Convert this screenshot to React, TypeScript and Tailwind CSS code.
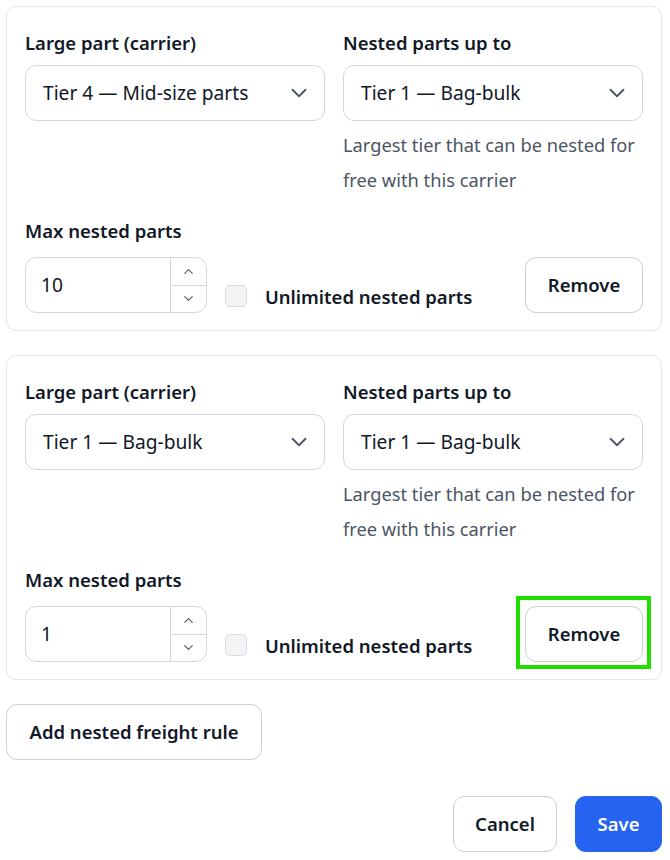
import React from "react";

type Rule = {
  carrier: string;
  nested: string;
  max: string;
  focused?: boolean;
};

const rules: Rule[] = [
  { carrier: "Tier 4 — Mid-size parts", nested: "Tier 1 — Bag-bulk", max: "10" },
  { carrier: "Tier 1 — Bag-bulk", nested: "Tier 1 — Bag-bulk", max: "1", focused: true },
];

function Chevron({ up = false, className = "" }: { up?: boolean; className?: string }) {
  return (
    <svg viewBox="0 0 20 20" fill="none" className={className}>
      <path
        d={up ? "M5 12.5 10 7.5l5 5" : "M5 7.5 10 12.5l5-5"}
        stroke="currentColor"
        strokeWidth="1.4"
        strokeLinecap="round"
        strokeLinejoin="round"
      />
    </svg>
  );
}

function Select({ value }: { value: string }) {
  return (
    <div className="flex h-[56px] items-center justify-between rounded-[11px] border border-[#d4d7dd] bg-white pl-[17px] pr-[12px] text-[19.2px] text-[#111827]">
      <span>{value}</span>
      <Chevron className="h-[26px] w-[26px] text-[#4b5563]" />
    </div>
  );
}

function RuleCard({ rule }: { rule: Rule }) {
  return (
    <div className="rounded-[10px] border border-[#e3e5ea] bg-white px-[18px] pt-[22px] pb-[17px]">
      <div className="grid grid-cols-2 gap-x-[18px]">
        <div>
          <div className="mb-[8px] text-[18.5px] leading-[28px] font-semibold text-[#111827]">Large part (carrier)</div>
          <Select value={rule.carrier} />
        </div>
        <div>
          <div className="mb-[8px] text-[18.5px] leading-[28px] font-semibold text-[#111827]">Nested parts up to</div>
          <Select value={rule.nested} />
          <p className="mt-[6px] text-[18.3px] leading-[35px] text-[#4b5563]">
            Largest tier that can be nested for free with this carrier
          </p>
        </div>
      </div>

      <div className="mt-[20px] flex items-end">
        <div>
          <div className="mb-[12px] text-[18.5px] leading-[28px] font-semibold text-[#111827]">Max nested parts</div>
          <div className="flex h-[56px] w-[182px] overflow-hidden rounded-[11px] border border-[#d4d7dd] bg-white">
            <div className="flex flex-1 items-center pl-[15px] text-[19.2px] text-[#111827]">{rule.max}</div>
            <div className="flex w-[36px] flex-col border-l border-[#d4d7dd]">
              <div className="flex flex-1 items-center justify-center border-b border-[#d4d7dd] text-[#4b5563]">
                <Chevron up className="h-[15px] w-[15px]" />
              </div>
              <div className="flex flex-1 items-center justify-center text-[#4b5563]">
                <Chevron className="h-[15px] w-[15px]" />
              </div>
            </div>
          </div>
        </div>

        <label className="ml-[18px] flex h-[32px] items-center gap-[18px]">
          <span className="-mt-[3px] h-[22px] w-[22px] rounded-[5px] border border-[#d9dce1] bg-[#f3f4f6]" />
          <span className="text-[18.5px] font-semibold text-[#111827]">Unlimited nested parts</span>
        </label>

        <button className="relative ml-auto h-[56px] w-[118px] rounded-[11px] border border-[#cfcfcf] bg-white text-[18.5px] font-semibold text-[#111827]">
          Remove
          {rule.focused && (
            <span className="pointer-events-none absolute -top-[11px] -right-[9px] -bottom-[8px] -left-[10px] border-4 border-[#22de00]" />
          )}
        </button>
      </div>
    </div>
  );
}

export default function App() {
  return (
    <div className="min-h-screen w-[670px] bg-white px-[6px] pt-[6px] font-['Noto_Sans',sans-serif]">
      <div className="flex w-[656px] flex-col gap-[24px]">
        {rules.map((rule, i) => (
          <RuleCard key={i} rule={rule} />
        ))}
      </div>

      <button className="mt-[24px] h-[56px] w-[256px] rounded-[11px] border border-[#cfcfcf] bg-white text-[18.5px] font-semibold text-[#111827]">
        Add nested freight rule
      </button>

      <div className="mt-[36px] flex w-[656px] justify-end gap-[18px]">
        <button className="h-[56px] w-[104px] rounded-[11px] border border-[#cfcfcf] bg-white text-[18.5px] font-semibold text-[#111827]">
          Cancel
        </button>
        <button className="h-[56px] w-[87px] rounded-[11px] bg-[#2563f0] text-[18.5px] font-semibold text-white">
          Save
        </button>
      </div>
    </div>
  );
}
